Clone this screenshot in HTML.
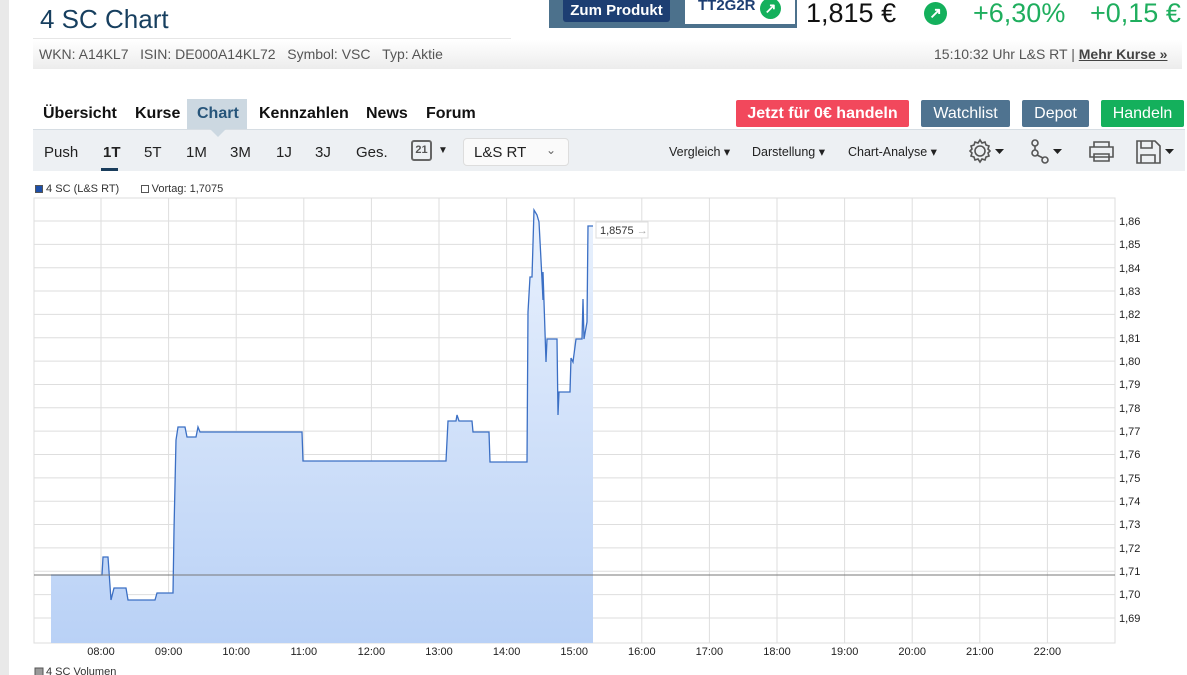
<!DOCTYPE html>
<html><head><meta charset="utf-8"><style>
*{margin:0;padding:0;box-sizing:border-box}
body{width:1187px;height:675px;overflow:hidden;background:#fff;font-family:"Liberation Sans",sans-serif;position:relative}
.a{position:absolute;white-space:nowrap}
.btn{position:absolute;color:#fff;font-size:16px;text-align:center;line-height:27px;border-radius:2px;height:27px;top:100px}
.tb{position:absolute;top:144px;font-size:15px;color:#222}
.sm{position:absolute;top:144px;font-size:12.5px;color:#222}
</style></head><body>
<div class="a" style="left:0;top:0;width:9px;height:675px;background:#e9e9e9"></div>
<div class="a" style="left:40px;top:4px;font-size:26px;color:#173f5f">4 SC Chart</div>
<div class="a" style="left:33px;top:38px;width:478px;height:1px;background:#e6e6e6"></div>
<div class="a" style="left:33px;top:40px;width:1149px;height:29px;background:linear-gradient(#fff,#ececec)"></div>
<div class="a" style="left:39px;top:46px;font-size:14px;color:#555">WKN: A14KL7 &nbsp;&nbsp;ISIN: DE000A14KL72 &nbsp;&nbsp;Symbol: VSC &nbsp;&nbsp;Typ: Aktie</div>
<div class="a" style="left:934px;top:46px;font-size:14px;color:#555">15:10:32 Uhr L&amp;S RT | <b style="text-decoration:underline;color:#444">Mehr Kurse »</b></div>
<div class="a" style="left:549px;top:0;width:248px;height:28px;background:#4c718c"></div>
<div class="a" style="left:563px;top:0;width:107px;height:22px;background:#1d3e72;border-radius:0 0 3px 3px;color:#fff;font-weight:bold;font-size:15px;text-align:center;line-height:22px">Zum Produkt</div>
<div class="a" style="left:685px;top:0;width:110px;height:24px;background:#fff"></div>
<div class="a" style="left:698px;top:-3px;font-size:15px;font-weight:bold;color:#1d3e72">TT2G2R</div>
<div class="a" style="left:760px;top:-2px;width:21px;height:21px;border-radius:50%;background:#14b05c;color:#fff;font-size:14px;text-align:center;line-height:21px;font-weight:bold">↗</div>
<div class="a" style="left:806px;top:-2px;font-size:27px;color:#111">1,815 €</div>
<div class="a" style="left:924px;top:2px;width:23px;height:23px;border-radius:50%;background:#14b05c;color:#fff;font-size:15px;text-align:center;line-height:23px;font-weight:bold">↗</div>
<div class="a" style="left:973px;top:-2px;font-size:27px;color:#1fae5e">+6,30%</div>
<div class="a" style="left:1090px;top:-2px;font-size:27px;color:#1fae5e">+0,15 €</div>

<div class="a" style="left:187px;top:99px;width:60px;height:30px;background:#ccd8e1"></div>
<div class="a" style="left:43px;top:105px;font-size:16px;font-weight:bold;color:#111;word-spacing:0">Übersicht</div>
<div class="a" style="left:135px;top:105px;font-size:16px;font-weight:bold;color:#111">Kurse</div>
<div class="a" style="left:197px;top:105px;font-size:16px;font-weight:bold;color:#27557a">Chart</div>
<div class="a" style="left:259px;top:105px;font-size:16px;font-weight:bold;color:#111">Kennzahlen</div>
<div class="a" style="left:366px;top:105px;font-size:16px;font-weight:bold;color:#111">News</div>
<div class="a" style="left:426px;top:105px;font-size:16px;font-weight:bold;color:#111">Forum</div>
<div class="btn" style="left:736px;width:173px;background:#f2485c;font-weight:bold">Jetzt für 0€ handeln</div>
<div class="btn" style="left:921px;width:89px;background:#4f7390">Watchlist</div>
<div class="btn" style="left:1022px;width:67px;background:#4f7390">Depot</div>
<div class="btn" style="left:1101px;width:83px;background:#14b05c">Handeln</div>

<div class="a" style="left:33px;top:129px;width:1152px;height:42px;background:#edf0f3;border-top:1px solid #d6dde3"></div>
<div class="a" style="left:210px;top:129px;width:0;height:0;border-left:8px solid transparent;border-right:8px solid transparent;border-top:8px solid #ccd8e1"></div>
<div class="tb" style="left:44px">Push</div>
<div class="tb" style="left:103px;font-weight:bold">1T</div>
<div class="a" style="left:101px;top:168px;width:17px;height:3px;background:#1a3d5c"></div>
<div class="tb" style="left:144px">5T</div>
<div class="tb" style="left:186px">1M</div>
<div class="tb" style="left:230px">3M</div>
<div class="tb" style="left:276px">1J</div>
<div class="tb" style="left:315px">3J</div>
<div class="tb" style="left:356px">Ges.</div>
<div class="a" style="left:411px;top:140px;width:21px;height:21px;border:2px solid #666;border-radius:3px;font-size:11px;font-weight:bold;color:#555;text-align:center;line-height:17px">21</div>
<div class="a" style="left:438px;top:145px;font-size:10px;color:#222">▼</div>
<div class="a" style="left:463px;top:138px;width:106px;height:28px;background:#fafafa;border:1px solid #ddd;border-radius:4px"></div>
<div class="tb" style="left:474px;top:144px">L&amp;S RT</div>
<div class="a" style="left:546px;top:143px;font-size:12px;color:#666">⌄</div>
<div class="sm" style="left:669px">Vergleich ▾</div>
<div class="sm" style="left:752px">Darstellung ▾</div>
<div class="sm" style="left:848px">Chart-Analyse ▾</div>
<svg class="a" style="left:965px;top:136px" width="222" height="30" viewBox="0 0 222 30">
<g fill="none" stroke="#555" stroke-width="1.6">
<circle cx="15" cy="15" r="5"/><path d="M15 4l2 3 3-1 1 3 3 1-1 3 2 2-2 2 1 3-3 1-1 3-3-1-2 3-2-3-3 1-1-3-3-1 1-3-2-2 2-2-1-3 3-1 1-3 3 1z"/>
<circle cx="70" cy="7" r="3"/><circle cx="70" cy="17" r="3"/><circle cx="80" cy="24" r="3"/><path d="M70 10v4M72 19l6 3"/>
<path d="M129 11v-5h15v5M125 11h23v10h-23zM129 18h15v7h-15z"/>
<path d="M172 5h18l5 5v17h-23zM176 5v7h11v-7M176 27v-8h14v8"/>
</g>
<g fill="#222"><path d="M30 13h9l-4.5 5z"/><path d="M88 13h9l-4.5 5z"/><path d="M200 13h9l-4.5 5z"/></g>
</svg>

<div class="a" style="left:35px;top:183px;font-size:11px;color:#333"><span style="display:inline-block;width:8px;height:8px;background:#1d4fa8;border:1px solid #555;vertical-align:-1px"></span> 4 SC (L&amp;S RT) &nbsp;&nbsp;&nbsp;&nbsp;&nbsp;&nbsp;<span style="display:inline-block;width:8px;height:8px;border:1px solid #555;vertical-align:-1px"></span> Vortag: 1,7075</div>

<svg class="a" style="left:0;top:0" width="1187" height="675" viewBox="0 0 1187 675">
<defs><linearGradient id="g" x1="0" y1="0" x2="0" y2="1"><stop offset="0" stop-color="#e9f1fd"/><stop offset="1" stop-color="#b9d1f6"/></linearGradient></defs>
<rect x="34" y="198" width="1081" height="445" fill="#fff" stroke="#ddd"/>
<g stroke="#dedede" stroke-width="1">
<path d="M101 198V643M168.6 198V643M236.2 198V643M303.8 198V643M371.4 198V643M439 198V643M506.6 198V643M574.2 198V643M641.8 198V643M709.4 198V643M777 198V643M844.6 198V643M912.2 198V643M979.8 198V643M1047.4 198V643"/>
<path d="M34 221H1115M34 244.35H1115M34 267.7H1115M34 291.05H1115M34 314.4H1115M34 337.75H1115M34 361.1H1115M34 384.45H1115M34 407.8H1115M34 431.15H1115M34 454.5H1115M34 477.85H1115M34 501.2H1115M34 524.55H1115M34 547.9H1115M34 571.25H1115M34 594.6H1115M34 617.95H1115"/>
</g>
<path id="p" d="M51 575H102L103 557H108L111 600L114 588H126L128 600H155L157 593H173L174 530L176 440L178 427H185L187 437H196L198 427L200 432H302L303 461H446L448 421L456 421L457 415L459 421H472L473 432H489L490 462H527L528 312L530 277L532 277L534 210L537 215L539 222L541 260L543 300L543 272L546 362L547 339H557L558 415L559 392H570L571 358L573 362L576 339H582L583 299L584 339L587 322L588 226H593V643H51Z" fill="url(#g)" stroke="none"/>
<path d="M51 575H102L103 557H108L111 600L114 588H126L128 600H155L157 593H173L174 530L176 440L178 427H185L187 437H196L198 427L200 432H302L303 461H446L448 421L456 421L457 415L459 421H472L473 432H489L490 462H527L528 312L530 277L532 277L534 210L537 215L539 222L541 260L543 300L543 272L546 362L547 339H557L558 415L559 392H570L571 358L573 362L576 339H582L583 299L584 339L587 322L588 226H593" fill="none" stroke="#3b6fc4" stroke-width="1.3"/>
<path d="M34 575H1115" stroke="#777" stroke-width="1"/>
<rect x="596" y="222" width="52" height="16" fill="#fff" stroke="#ddd"/>
<text x="600" y="234" font-size="11" fill="#333" font-family="Liberation Sans">1,8575 <tspan fill="#aaa">→</tspan></text>
<g font-size="11" fill="#222" font-family="Liberation Sans">
<text x="1119" y="225">1,86</text><text x="1119" y="248">1,85</text><text x="1119" y="272">1,84</text><text x="1119" y="295">1,83</text><text x="1119" y="318">1,82</text><text x="1119" y="342">1,81</text><text x="1119" y="365">1,80</text><text x="1119" y="388">1,79</text><text x="1119" y="412">1,78</text><text x="1119" y="435">1,77</text><text x="1119" y="458">1,76</text><text x="1119" y="482">1,75</text><text x="1119" y="505">1,74</text><text x="1119" y="528">1,73</text><text x="1119" y="552">1,72</text><text x="1119" y="575">1,71</text><text x="1119" y="598">1,70</text><text x="1119" y="622">1,69</text>
</g>
<g font-size="11" fill="#222" font-family="Liberation Sans" text-anchor="middle">
<text x="101" y="655">08:00</text><text x="168.6" y="655">09:00</text><text x="236.2" y="655">10:00</text><text x="303.8" y="655">11:00</text><text x="371.4" y="655">12:00</text><text x="439" y="655">13:00</text><text x="506.6" y="655">14:00</text><text x="574.2" y="655">15:00</text><text x="641.8" y="655">16:00</text><text x="709.4" y="655">17:00</text><text x="777" y="655">18:00</text><text x="844.6" y="655">19:00</text><text x="912.2" y="655">20:00</text><text x="979.8" y="655">21:00</text><text x="1047.4" y="655">22:00</text>
</g>
<rect x="35" y="668" width="8" height="8" fill="#999" stroke="#555"/>
<text x="46" y="675" font-size="11" fill="#333" font-family="Liberation Sans">4 SC Volumen</text>
</svg>
</body></html>
